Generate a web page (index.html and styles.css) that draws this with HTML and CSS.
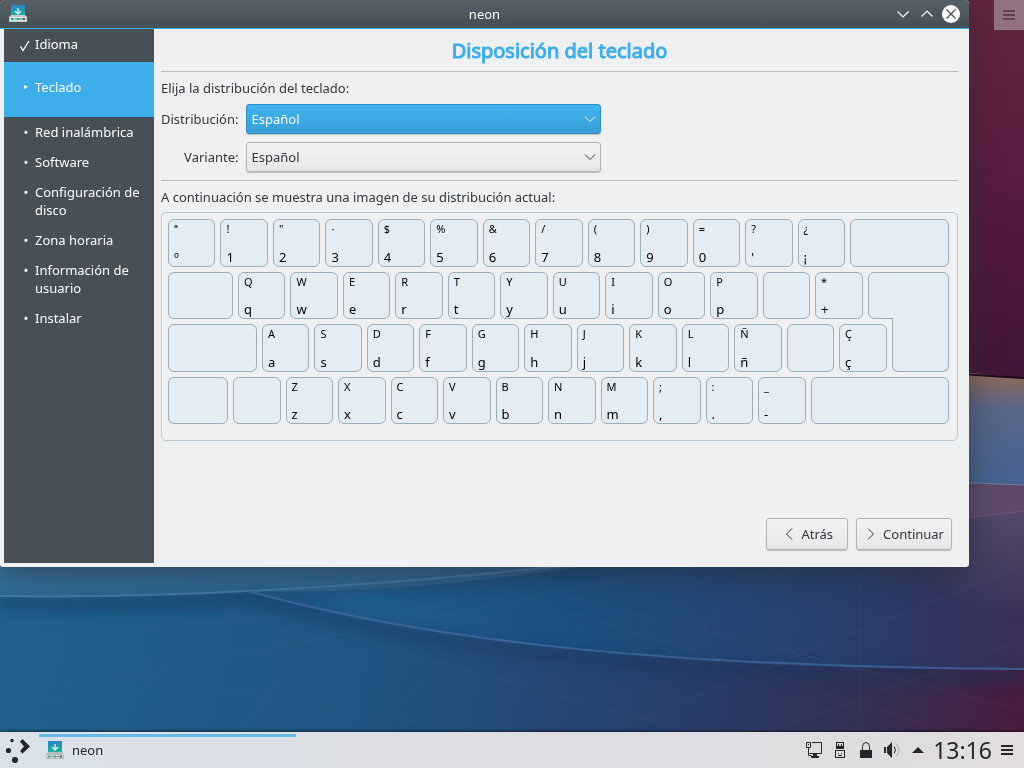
FILE: index.html
```html
<!DOCTYPE html>
<html lang="es">
<head>
<meta charset="utf-8">
<meta name="viewport" content="width=device-width, initial-scale=1">
<title>neon</title>
<link rel="stylesheet" href="styles.css">
</head>
<body>
<svg class="wallpaper" viewBox="0 0 1024 768" preserveAspectRatio="none" aria-hidden="true">
  <defs>
    <linearGradient id="top" x1="0" y1="0" x2="0" y2="1">
      <stop offset="0" stop-color="#62263f"/><stop offset=".2" stop-color="#5a1d40"/><stop offset=".5" stop-color="#421535"/><stop offset="1" stop-color="#351229"/>
    </linearGradient>
    <linearGradient id="side" x1="0" y1="375" x2="0" y2="484" gradientUnits="userSpaceOnUse">
      <stop offset="0" stop-color="#8f6a5a"/><stop offset=".3" stop-color="#5a6688"/><stop offset="1" stop-color="#456391"/>
    </linearGradient>
    <linearGradient id="mid" x1="0" y1="560" x2="1024" y2="650" gradientUnits="userSpaceOnUse">
      <stop offset="0" stop-color="#22618f"/><stop offset=".35" stop-color="#215f8f"/><stop offset=".55" stop-color="#1c5080"/><stop offset=".82" stop-color="#293f6c"/><stop offset="1" stop-color="#3a2f58"/>
    </linearGradient>
    <radialGradient id="haze" cx="1010" cy="511" r="110" gradientUnits="userSpaceOnUse">
      <stop offset="0" stop-color="#554a6a"/><stop offset="1" stop-color="#554a6a" stop-opacity="0"/>
    </radialGradient>
    <linearGradient id="low" x1="0" y1="600" x2="1024" y2="800" gradientUnits="userSpaceOnUse">
      <stop offset="0" stop-color="#20628e"/><stop offset=".35" stop-color="#215583"/><stop offset=".65" stop-color="#273f6b"/><stop offset=".85" stop-color="#352e53"/><stop offset="1" stop-color="#4d1a3c"/>
    </linearGradient>
    <linearGradient id="left" x1="0" y1="0" x2="1" y2="0">
      <stop offset="0" stop-color="#33709a"/><stop offset="1" stop-color="#2f6590"/>
    </linearGradient>
    <filter id="soft" x="-10%" y="-50%" width="120%" height="200%"><feGaussianBlur stdDeviation="7"/></filter>
  </defs>
  <rect width="1024" height="768" fill="url(#top)"/>
  <path d="M0 372H960L1024 378V768H0Z" fill="url(#side)"/>
  <path d="M960 374L1024 378" stroke="#1d0d1b" stroke-width="2"/>
  <path d="M900 480L1024 485V560H900Z" fill="#5e4b6c"/>
  <path d="M900 480L1024 485" stroke="#6c80a4"/>
  <path d="M0 560H720L969 518L1024 511V768H0Z" fill="url(#mid)"/>
  <path d="M880 532L969 518L1024 511V640H880Z" fill="url(#haze)"/>
  <path d="M960 519L1024 511" stroke="#7d5372"/>
  <path d="M0 560H620Q420 595 248 591Q120 598 0 596Z" fill="url(#left)"/>
  <path d="M0 598Q120 600 248 592C440 645 680 670 1024 670V768H0Z" fill="url(#low)"/>
  <path d="M0 604Q125 606 252 598C440 652 680 677 1024 677" fill="none" stroke="#14365c" stroke-width="12" opacity=".5" filter="url(#soft)"/>
  <path d="M250 598Q420 590 590 566" fill="none" stroke="#143e64" stroke-width="8" opacity=".4" filter="url(#soft)"/>
  <path d="M0 596Q120 598 248 591Q420 582 580 564" fill="none" stroke="#4378a3" stroke-width="2"/>
  <path d="M248 591C440 644 680 667 1024 669" fill="none" stroke="#40669b" stroke-width="2" opacity=".8"/>
  <path d="M0 733L340 565M0 655L500 735M90 735L250 596M240 735L320 620M360 735L560 565M0 700L700 566M180 590L700 735M420 565L960 735M600 735L1024 565M640 735L740 570M560 595L1024 710M760 735L1024 640M860 570V735M0 640L330 612" fill="none" stroke="#7b7f84" opacity=".1"/>
</svg>

<div class="desktop">
  <button class="desktop-menu" type="button" aria-label="Opciones del escritorio">
    <svg width="12" height="10" viewBox="0 0 12 10"><path d="M0 1h12M0 5h12M0 9h12" stroke="currentColor" stroke-width="2"/></svg>
  </button>

  <div class="window">
    <header class="titlebar">
      <svg class="app-icon" width="18" height="18" viewBox="0 0 18 18" aria-hidden="true">
        <defs><linearGradient id="disk" x1="0" y1="0" x2="0" y2="1"><stop offset="0" stop-color="#2d84c4"/><stop offset="1" stop-color="#1cb59c"/></linearGradient></defs>
        <path d="M2 0h14v11H2z" fill="url(#disk)"/><path d="M2 10h14l2 2v5H0v-5z" fill="#c5cbcb"/><path d="M1 12h16v4H1z" fill="#e2e5e3"/>
        <path d="M2 14h9" stroke="#1abc9c" stroke-width="1"/><path d="M11 14h4" stroke="#566"/><path d="M2 13h2v2H2zM8 13h2v2H8z" fill="#16a085"/><path d="M14 13h2v2h-2z" fill="#555"/>
        <path d="M9 3v5M6 6l3 3 3-3" fill="none" stroke="#d9f2f8" stroke-width="1.3"/>
      </svg>
      <h1 class="window-title">neon</h1>
      <div class="window-buttons">
        <button type="button" aria-label="Minimizar"><svg width="18" height="18" viewBox="0 0 18 18"><path d="M3.500 6.500l5.500 5.500 5.500-5.500" fill="none" stroke="#fcfcfc" stroke-width="1.200"/></svg></button>
        <button type="button" aria-label="Maximizar"><svg width="18" height="18" viewBox="0 0 18 18"><path d="M3.500 11.500L9 6l5.500 5.500" fill="none" stroke="#fcfcfc" stroke-width="1.200"/></svg></button>
        <button type="button" aria-label="Cerrar"><svg width="18" height="18" viewBox="0 0 18 18"><circle cx="9" cy="9" r="9" fill="#fcfcfc"/><path d="M4.500 4.500l9 9M13.500 4.500l-9 9" stroke="#475057" stroke-width="1.300"/></svg></button>
      </div>
    </header>

    <div class="window-body">
      <nav class="steps" aria-label="Pasos">
        <ol class="step-list">
          <li class="step done"><span class="mark"><svg width="11" height="13" viewBox="0 0 11 13" aria-hidden="true"><path d="M1.500 6.500l2.500 4L10 1" fill="none" stroke="#fff" stroke-width="1.400"/></svg></span><span>Idioma</span></li>
          <li class="step current" aria-current="step"><span class="mark"><svg width="4" height="4" viewBox="0 0 4 4" aria-hidden="true"><path d="M0 0l4 2-4 2z" fill="#fff"/></svg></span><span>Teclado</span></li>
          <li class="step"><span class="mark">•</span><span>Red inalámbrica</span></li>
          <li class="step"><span class="mark">•</span><span>Software</span></li>
          <li class="step"><span class="mark">•</span><span>Configuración de disco</span></li>
          <li class="step"><span class="mark">•</span><span>Zona horaria</span></li>
          <li class="step"><span class="mark">•</span><span>Información de usuario</span></li>
          <li class="step"><span class="mark">•</span><span>Instalar</span></li>
        </ol>
      </nav>

      <main class="page">
        <h2 class="page-title">Disposición del teclado</h2>
        <form class="choices">
          <p class="hint">Elija la distribución del teclado:</p>
          <label for="layout">Distribución:</label>
          <div class="combo active"><select id="layout"><option>Español</option></select><svg width="12" height="8" viewBox="0 0 12 8" aria-hidden="true"><path d="M1 1.500l5 5 5-5" fill="none" stroke="currentColor"/></svg></div>
          <label for="variant">Variante:</label>
          <div class="combo"><select id="variant"><option>Español</option></select><svg width="12" height="8" viewBox="0 0 12 8" aria-hidden="true"><path d="M1 1.500l5 5 5-5" fill="none" stroke="currentColor"/></svg></div>
        </form>
        <p class="preview-label">A continuación se muestra una imagen de su distribución actual:</p>
        <div class="keyboard">
          <div class="key-row row-digits">
            <div class="key"><span>ª</span><b>º</b></div><div class="key"><span>!</span><b>1</b></div><div class="key"><span>"</span><b>2</b></div><div class="key"><span>·</span><b>3</b></div><div class="key"><span>$</span><b>4</b></div><div class="key"><span>%</span><b>5</b></div><div class="key"><span>&amp;</span><b>6</b></div><div class="key"><span>/</span><b>7</b></div><div class="key"><span>(</span><b>8</b></div><div class="key"><span>)</span><b>9</b></div><div class="key"><span>=</span><b>0</b></div><div class="key"><span>?</span><b>'</b></div><div class="key"><span>¿</span><b>¡</b></div><div class="key"></div>
          </div>
          <div class="key-row row-upper">
            <div class="key"></div><div class="key"><span>Q</span><b>q</b></div><div class="key"><span>W</span><b>w</b></div><div class="key"><span>E</span><b>e</b></div><div class="key"><span>R</span><b>r</b></div><div class="key"><span>T</span><b>t</b></div><div class="key"><span>Y</span><b>y</b></div><div class="key"><span>U</span><b>u</b></div><div class="key"><span>I</span><b>i</b></div><div class="key"><span>O</span><b>o</b></div><div class="key"><span>P</span><b>p</b></div><div class="key"></div><div class="key"><span>*</span><b>+</b></div><div class="key enter-top"></div>
          </div>
          <div class="key-row row-home">
            <div class="key"></div><div class="key"><span>A</span><b>a</b></div><div class="key"><span>S</span><b>s</b></div><div class="key"><span>D</span><b>d</b></div><div class="key"><span>F</span><b>f</b></div><div class="key"><span>G</span><b>g</b></div><div class="key"><span>H</span><b>h</b></div><div class="key"><span>J</span><b>j</b></div><div class="key"><span>K</span><b>k</b></div><div class="key"><span>L</span><b>l</b></div><div class="key"><span>Ñ</span><b>ñ</b></div><div class="key"></div><div class="key"><span>Ç</span><b>ç</b></div><div class="key enter-bottom"></div>
          </div>
          <div class="key-row row-lower">
            <div class="key"></div><div class="key"></div><div class="key"><span>Z</span><b>z</b></div><div class="key"><span>X</span><b>x</b></div><div class="key"><span>C</span><b>c</b></div><div class="key"><span>V</span><b>v</b></div><div class="key"><span>B</span><b>b</b></div><div class="key"><span>N</span><b>n</b></div><div class="key"><span>M</span><b>m</b></div><div class="key"><span>;</span><b>,</b></div><div class="key"><span>:</span><b>.</b></div><div class="key"><span>_</span><b>-</b></div><div class="key"></div>
          </div>
        </div>
        <footer class="actions">
          <button class="push back" type="button"><svg width="8" height="12" viewBox="0 0 8 12" aria-hidden="true"><path d="M7 .5L1.500 6 7 11.500" fill="none" stroke="#31363b"/></svg>Atrás</button>
          <button class="push" type="button"><svg width="8" height="12" viewBox="0 0 8 12" aria-hidden="true"><path d="M1 .5L6.500 6 1 11.500" fill="none" stroke="#31363b"/></svg>Continuar</button>
        </footer>
      </main>
    </div>
  </div>
</div>

<footer class="panel">
  <button class="launcher" type="button" aria-label="Menú de aplicaciones">
    <svg width="26" height="26" viewBox="0 0 26 26" fill="#232629"><circle cx="7" cy="3.500" r="1.700"/><circle cx="3.500" cy="13.500" r="2.600"/><circle cx="10" cy="23" r="3.100"/><path d="M15 4.500l2.500-2.500 7.500 7.500-7.500 7-2.500-2.500 4-4.500z"/></svg>
  </button>
  <button class="task" type="button">
    <svg width="18" height="18" viewBox="0 0 18 18" aria-hidden="true">
      <path d="M2 0h14v12H2z" fill="url(#disk)"/><path d="M2 11h14l2 3v4H0v-4z" fill="#b5bcbd"/><path d="M1 14h16v3H1z" fill="#d8dddc"/>
      <path d="M2 15.500h12" stroke="#899"/><path d="M2 14.500h2v2H2zM8 14.500h2v2H8z" fill="#1abc9c"/><path d="M14 14.500h2v2h-2z" fill="#555"/>
      <path d="M9 3v5M6 6l3 3 3-3" fill="none" stroke="#d9f2f8" stroke-width="1.300"/>
    </svg>neon
  </button>
  <div class="tray">
    <button type="button" aria-label="Red"><svg width="16" height="16" viewBox="0 0 16 16" fill="none" stroke="#232629"><path d="M.5.500h4v5h-4zM2.500 5.500v8h3M6 .5h9.500v11h-12M2 2.500h1"/><path d="M7 12h4v2h2v2H5v-2h2z" fill="#232629" stroke="none"/></svg></button>
    <button type="button" aria-label="Dispositivos"><svg width="10" height="16" viewBox="0 0 10 16"><path d="M1 0h8v7H1zM0 8h10v8H0z" fill="#232629"/><path d="M2 1h6v3H2zM1 9h8v6H1z" fill="#dedde1"/><path d="M3 2h1v2H3zM6 2h1v2H6zM3 11h1v1H3zM6 11h1v1H6zM3 13h4v1H3z" fill="#232629"/></svg></button>
    <button type="button" aria-label="Bloqueo"><svg width="12" height="16" viewBox="0 0 12 16"><path d="M0 8h12v8H0z" fill="#232629"/><path d="M2.500 8V4.500a3.500 4 0 0 1 7 0V8" fill="none" stroke="#232629"/></svg></button>
    <button type="button" aria-label="Volumen"><svg width="16" height="16" viewBox="0 0 16 16"><path d="M0 5h2v6H0zM3 5l5-5v16l-5-5z" fill="#232629"/><path d="M10 4.500q3 3.500 0 7" fill="none" stroke="#232629"/><path d="M12 1.500q6 6.500 0 13" fill="none" stroke="#aaa"/></svg></button>
    <button type="button" aria-label="Más iconos"><svg width="12" height="6" viewBox="0 0 12 6"><path d="M0 6l6-6 6 6z" fill="#232629"/></svg></button>
    <time class="clock">13:16</time>
    <button type="button" aria-label="Opciones del panel"><svg width="12" height="10" viewBox="0 0 12 10"><path d="M0 1h12M0 5h12M0 9h12" stroke="#232629" stroke-width="2"/></svg></button>
  </div>
</footer>
</body>
</html>
```

FILE: styles.css
```css
* { box-sizing: border-box; }

body {
  margin: 0;
  min-height: 100vh;
  display: flex;
  flex-direction: column;
  background: #245580;
  color: #31363b;
  font: 13px/18px "Noto Sans", "Open Sans", sans-serif;
}

button, select { font: inherit; color: inherit; }
button { padding: 0; border: 0; background: none; }
svg { display: block; flex: none; }
h1, h2, p, ol { margin: 0; padding: 0; font-weight: 400; }

.wallpaper {
  position: fixed;
  inset: 0;
  z-index: -1;
  width: 100%;
  height: 100%;
}

.desktop {
  flex: 1;
  display: flex;
  flex-direction: row-reverse;
  align-items: flex-start;
  gap: 25px;
}

.desktop-menu {
  width: 30px;
  height: 30px;
  display: grid;
  place-items: center;
  background: #937180;
  color: #604352;
}

.window {
  flex: 1;
  display: flex;
  flex-direction: column;
  min-height: 567px;
  overflow: hidden;
  background: #eff0f1;
  border-radius: 4px 4px 3px 3px;
  box-shadow: 0 6px 32px rgba(40, 44, 50, 0.6);
}

.titlebar {
  display: grid;
  grid-template-columns: 1fr auto 1fr;
  align-items: center;
  height: 29px;
  padding: 0 9px;
  border-bottom: 1px solid #3daee9;
  background: linear-gradient(#566068, #464f56);
  color: #fcfcfc;
}

.window-title { font-size: 13px; }
.window-buttons { display: flex; justify-content: flex-end; gap: 6px; }

.window-body { flex: 1; display: flex; padding: 0 11px 4px 4px; }

.steps { width: 150px; background: #475057; color: #fcfcfc; }
.step-list { list-style: none; }
.step { display: flex; padding: 6px 10px 6px 15px; }

.mark {
  flex: none;
  display: grid;
  place-items: center;
  width: 14px;
  height: 18px;
  margin-right: 2px;
}

.step.done { padding-bottom: 9px; }
.done .mark { width: 11px; margin-right: 5px; align-items: end; }
.step.current { padding-top: 16px; padding-bottom: 21px; background: #3daee9; }

.page { flex: 1; display: flex; flex-direction: column; padding: 0 0 13px 7px; }

.page-title {
  padding: 8px 0 7px;
  border-bottom: 1px solid #bbbdbf;
  color: #3daee9;
  font-size: 20px;
  line-height: 27px;
  text-align: center;
  -webkit-text-stroke: 1px #3daee9;
}

.choices {
  display: grid;
  grid-template-columns: auto 355px;
  justify-content: start;
  align-items: center;
  gap: 8px 7px;
  padding: 7px 0 8px;
  border-bottom: 1px solid #bbbdbf;
}

.hint { grid-column: 1 / -1; margin-bottom: -1px; }
.choices label { text-align: right; }

.combo {
  display: grid;
  align-items: center;
  height: 30px;
  border: 1px solid #b1b4b6;
  border-radius: 3px;
  background: linear-gradient(#f1f2f3, #e6e7e9);
  box-shadow: 0 1px 1px rgba(0, 0, 0, 0.2);
}

.combo.active {
  border-color: #2d8cc0;
  background: linear-gradient(#40b3ee, #389fd7);
  color: #fcfcfc;
}

.combo select, .combo svg { grid-area: 1 / 1; }
.combo svg { justify-self: end; margin-right: 4px; pointer-events: none; }

.combo select {
  appearance: none;
  width: 100%;
  height: 28px;
  padding: 0 5px;
  border: 0;
  background: none;
}

.preview-label { padding: 7px 0 6px; }

.keyboard {
  display: grid;
  grid-template-rows: repeat(4, 1fr);
  gap: 5px;
  height: 229px;
  padding: 6px 8px 16px 6px;
  border: 1px solid #b9c9d2;
  border-radius: 5px;
}

.key-row { display: grid; gap: 5px; min-height: 0; }
.row-digits { grid-template-columns: repeat(13, minmax(0, 95fr)) minmax(0, 198fr); }
.row-upper { grid-template-columns: minmax(0, 130fr) repeat(12, minmax(0, 95fr)) minmax(0, 163fr); }
.row-home { grid-template-columns: minmax(0, 178fr) repeat(12, minmax(0, 95fr)) minmax(0, 115fr); }
.row-lower { grid-template-columns: minmax(0, 120fr) repeat(11, minmax(0, 95fr)) minmax(0, 277fr); }

.key {
  display: flex;
  flex-direction: column;
  justify-content: space-between;
  padding: 1px 5px 0;
  border: 1px solid #98b0bd;
  border-radius: 6px;
  background: #e4ecf4;
  color: #000;
}

.key span { font-size: 11px; line-height: 15px; }
.key b { font-size: 13px; line-height: 18px; font-weight: 400; }
.enter-top { border-bottom-right-radius: 0; }
.enter-bottom {
  margin-top: -6px;
  border-top: 0;
  border-radius: 0 0 6px 6px;
}

.actions {
  display: flex;
  justify-content: flex-end;
  gap: 8px;
  margin-top: auto;
  padding-right: 6px;
}

.push {
  display: flex;
  align-items: center;
  gap: 8px;
  height: 32px;
  padding: 0 7px 0 10px;
  border: 1px solid #b1b4b6;
  border-radius: 3px;
  background: linear-gradient(#f1f2f3, #e6e7e9);
  box-shadow: 0 1px 1px rgba(0, 0, 0, 0.2);
}

.push.back { padding: 0 14px 0 18px; }

.panel {
  display: flex;
  align-items: center;
  height: 36px;
  background: linear-gradient(90deg, #dae1e8, #dedde1 60%, #e0dcdf);
  box-shadow: 0 -1px 3px rgba(0, 0, 0, 0.6);
  color: #232629;
}

.launcher { padding: 0 8px 0 5px; }

.task {
  display: flex;
  align-items: center;
  align-self: stretch;
  gap: 8px;
  width: 257px;
  margin-top: 2px;
  padding: 0 7px 5px;
  border-top: 3px solid #67bbe8;
}

.tray {
  display: flex;
  align-items: center;
  margin-left: auto;
  padding-right: 4px;
}

.tray button { display: grid; place-items: center; width: 26px; height: 36px; }
.clock { padding: 0 2px; font-size: 23px; line-height: 36px; }
```
